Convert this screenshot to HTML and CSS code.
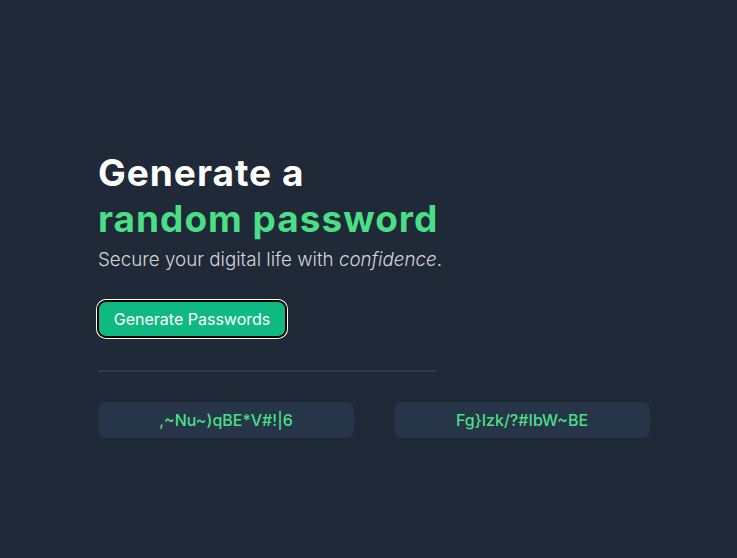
FILE: index.html
```html
<!DOCTYPE html>
<html lang="en">
<head>
<meta charset="utf-8">
<title>Password Generator</title>
<link rel="stylesheet" href="styles.css">
</head>
<body>
<main class="container">
  <h1 class="title">Generate a<br><span class="accent">random password</span></h1>
  <p class="subtitle">Secure your digital life with <em>confidence</em>.</p>
  <button class="btn" type="button">Generate Passwords</button>
  <hr class="divider">
  <div class="passwords">
    <div class="pw">,~Nu~)qBE*V#!|6</div>
    <div class="pw">Fg}Izk/?#IbW~BE</div>
  </div>
</main>
</body>
</html>
```
FILE: styles.css
```css
html, body {
  margin: 0;
  padding: 0;
  background: #1f2937;
  height: 100%;
}
body {
  font-family: Inter, "Noto Sans", sans-serif;
}
.container {
  padding: 150px 0 0 98px;
  width: 552px;
}
.title {
  margin: 0;
  font-size: 37px;
  line-height: 46px;
  font-weight: 700;
  color: #ffffff;
  letter-spacing: 1px;
}
.accent {
  color: #4adf86;
}
.subtitle {
  margin: 4px 0 0;
  font-size: 18.8px;
  line-height: 28px;
  font-weight: 300;
  color: #d5d4d8;
}
.btn {
  display: block;
  margin: 26px 0 0 -1px;
  padding: 0;
  height: 38px;
  width: 190px;
  white-space: nowrap;
  background: #10b981;
  color: #ffffff;
  font-family: Inter, sans-serif;
  font-size: 16px;
  border: 2px solid #000;
  border-radius: 9px;
  box-shadow: 0 0 0 1px #fff;
}
.divider {
  margin: 32px 0 0;
  width: 339px;
  border: 0;
  height: 2px;
  background: #2d3a4b;
}
.passwords {
  margin-top: 30px;
  display: flex;
  gap: 40px;
}
.pw {
  width: 256px;
  height: 36px;
  border-radius: 8px;
  background: #273549;
  color: #4adf86;
  font-size: 16px;
  font-weight: 500;
  display: flex;
  align-items: center;
  justify-content: center;
}
```
